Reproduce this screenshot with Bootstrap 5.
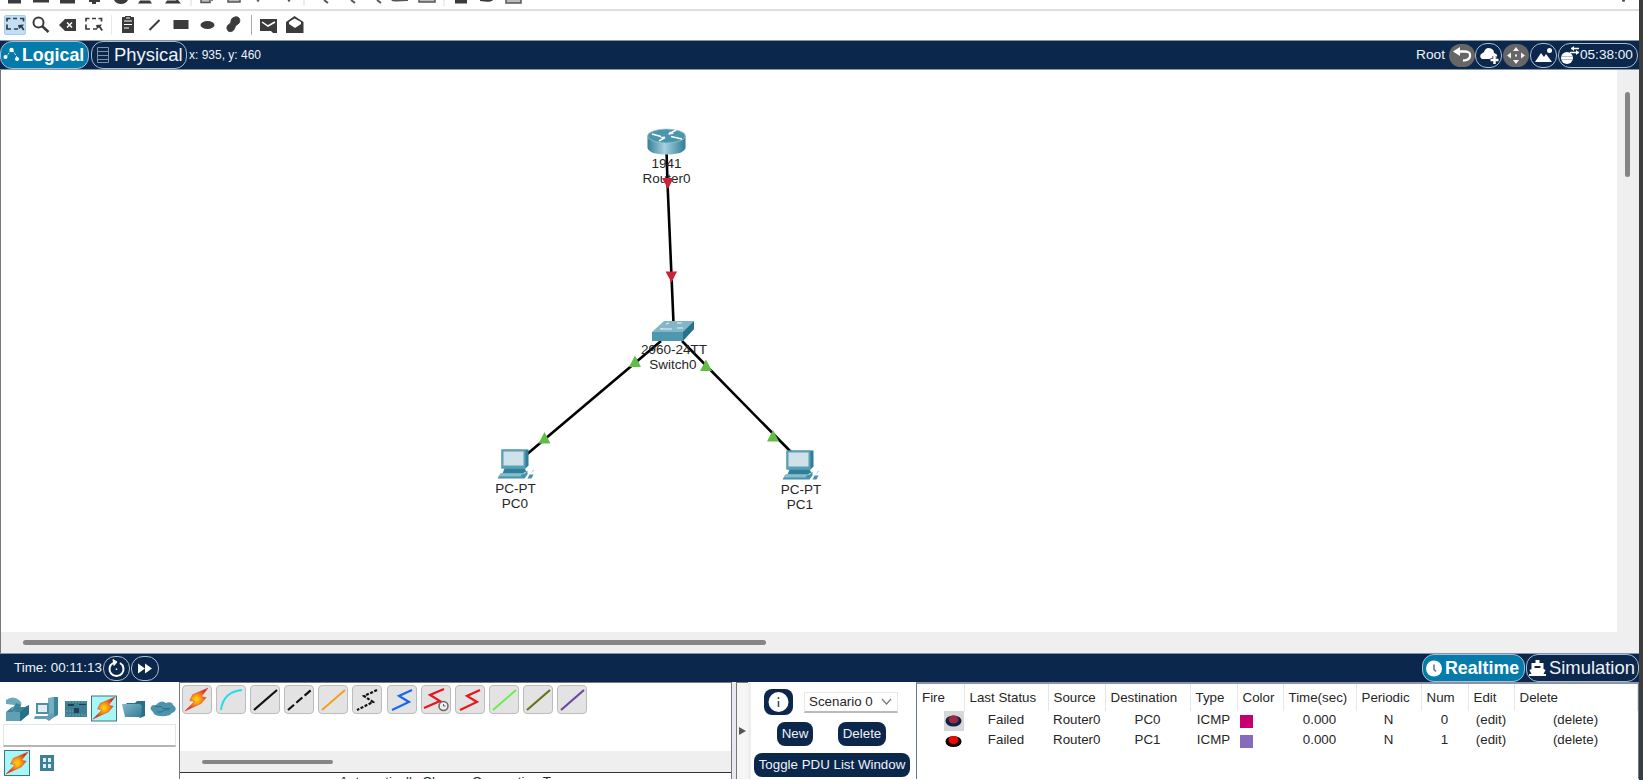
<!DOCTYPE html>
<html lang="en">
<head>
<meta charset="utf-8">
<title>Network Simulator</title>
<link href="https://cdn.jsdelivr.net/npm/bootstrap@5.3.0/dist/css/bootstrap.min.css" rel="stylesheet">
<style>
body{font-family:"Liberation Sans",Arial,sans-serif;font-size:13.33px;line-height:20px;color:#262626;background:#3c3c3c;width:1643px;height:780px}
svg{display:block;flex:none}
.app{width:1639px;height:780px;background:#fff}
.tb-top{height:11px;border-bottom:2px solid #dedede}
.tb-draw{height:29px}
.bar{height:30px;background:#0c274c;color:#eef3f8;border-top:1px solid #8596aa;border-bottom:1px solid #8596aa}
.bar.low{height:29px;border-bottom:0}
.pill{border:1px solid #a9bdd2;border-radius:12px;height:28px;font-size:18.4px;line-height:26px;white-space:nowrap}
.pill.on{background:#057bab;font-weight:700;font-size:17.8px;color:#fff}
.rnd{width:27px;height:25px;border:1px solid #a9bdd2;border-radius:12px}
.rnd.off{width:26px;height:23px;background:#666;border:0}
.clock{width:80px;height:25px;border:1px solid #a9bdd2;border-radius:12px;font-size:13.6px}
.stage{height:583px;background:#efefef;border-left:1px solid #777}
.sheet{width:1616px;height:562px;background:#fff}
.thumb{background:#858585;border-radius:3px}
.vthumb{width:5px;height:85px;margin:22px 0 0 8px}
.hthumb{width:743px;height:5px;margin:8px 0 0 22px}
.bottom{height:97px}
.p-dev{width:179px;padding:13px 0 0 3px}
.find{width:173px;height:23px;margin-top:2px;border:1px solid #e5e5e5;border-bottom:2px solid #b5b5b5}
.p-cab{width:553px;border:1px solid #777;border-width:1px 1px 0 1px}
.cab{width:30px;height:29px;border:1px solid #bcbcbc;border-radius:4px;background:#e3e3e3}
.cabs{gap:4.1px;padding:2px 0 0 2px;height:68px}
.cabscroll{height:22px;background:#efefef;border-bottom:1px solid #333}
.cabscroll .thumb{width:131px;height:4px;margin:9px 0 0 22px}
.split{width:19px;border-left:4px solid #e8e8ee;background:#f5f5f5;border-right:3px solid #ededed}
.split>div{border-left:1px solid #777;border-top:1px solid #777}
.p-scn{width:165px}
.bt{background:#0c274c;color:#eef3f8;border-radius:8px;height:24px;line-height:24px;text-align:center;white-space:nowrap;font-size:13.33px}
.sel{width:94px;height:21px;border:1px solid #e8e8e8;border-bottom:2px solid #bbb;line-height:20px}
.p-pdu{width:723px;border-left:1px solid #66788f;border-top:2px solid #8b93a5;border-right:1px solid #66788f}
.pdu{table-layout:fixed;width:720px;border-collapse:collapse}
.pdu td,.pdu th{padding:0;height:20.4px;line-height:18px;text-align:center;font-weight:400;white-space:nowrap;vertical-align:top}
.pdu th{height:26px;line-height:26px;border-right:1px solid #e6e6e6;text-align:left;padding:1px 0 0 5px}
.pdu td.l{text-align:left;padding-left:5px}
.sq{width:13px;height:13px;margin:4px 0 0 3px}
</style>
<script src="https://cdn.jsdelivr.net/npm/bootstrap@5.3.0/dist/js/bootstrap.bundle.min.js"></script>
</head>
<body class="overflow-hidden m-0">
<svg width="0" height="0" class="position-absolute">
<defs>
<linearGradient id="g1" x1="0" x2="1"><stop offset="0" stop-color="#36809a"/><stop offset=".45" stop-color="#a7d0dd"/><stop offset="1" stop-color="#2f7c96"/></linearGradient>
<linearGradient id="g2" x1="0" x2="1" y2="1"><stop offset="0" stop-color="#80b8ca"/><stop offset="1" stop-color="#327d96"/></linearGradient>
<radialGradient id="g3"><stop offset="0" stop-color="#ffe300"/><stop offset=".35" stop-color="#ff9d12"/><stop offset="1" stop-color="#d92c20"/></radialGradient>
<symbol id="bolt" viewBox="0 0 26 26"><path d="M25 1 9 8 6 14l5 1L1 25l17-8 5-6-5-1z" fill="url(#g3)" stroke="#dc3b22" stroke-width=".5"/></symbol>
<symbol id="pc" viewBox="0 0 40 32"><path d="M5 1h27v16l-3 3H5z" fill="#2e7f99"/><path d="M5 1h24v19H5z" fill="#5a9fb5"/><path d="M7 3h20v14H7z" fill="#cfe1e9"/><path d="M8 20h20l2 3-4 2H6z" fill="#2e7f99"/><path d="M4 25h24l3-3v4l-3 4H1z" fill="#4992aa"/><path d="M4 25h22l-2 3H2z" fill="#88bccb"/><path d="m31 30 2-4h4l-2 4z" fill="#4992aa"/><path d="M35 24q4-3 1-2" stroke="#acc" fill="none"/></symbol>
</defs></svg>
<main class="app d-flex flex-column">
<div class="tb-top d-flex justify-content-between">
<svg width="530" height="9" viewBox="0 0 530 9" fill="#3b3b3b"><path d="M8 0h13v3.500H8zM33 0h16v2.500H33zM60 0h15v3.500H60zM89 0h11v2h-4v2h-4V2h-3zM114 0h14q-2 4-7 4-5 0-7-4zM138 3.500l2-3h10l2 3zM165 3.500l2-3h10l2 3zM178 0l3 3.500h-2l-3-3.500zM455 0h12v3.500H455zM480 0h13q-2 3-13 1z"/><path d="M201 0v2.500h9V0M212 0v1M228 0v2h12V0M506 0v3h15V0M419 0v2h16V0" fill="#bbb" stroke="#555" stroke-width="1.500"/><path d="M257 0l2 1M288 1l2-1M324 0l4 3M351 0l4 3M377 0l4 3M392 0q1 1 16 0" stroke="#555" stroke-width="2" fill="none"/><path d="M191 0v6M304 0v6M444 0v6" stroke="#ddd"/></svg>
<svg width="22" height="5"><path d="M5 0h3v1q-1 2-3 0z" fill="#555"/></svg>
</div>
<div class="tb-draw d-flex">
<svg width="320" height="29" viewBox="0 11 320 29" fill="#3b3b3b">
<rect x="4.500" y="15.500" width="21" height="19" rx="1.500" fill="#c1dff6" stroke="#a5ccec"/>
<g fill="none" stroke="#3b3b3b" stroke-width="1.700"><path d="M7 21.500v-3h3.500M13 18.500h4M20 18.500h3.500v3M7 24.500v4.500h4M14 29h4"/><path d="M86 21.500v-3h3.500M92 18.500h4M98.500 18.500h3v3M86 24.500v4.500h4M93 29h4"/></g>
<path d="M18 25l6-.5-1.500 2 2 3-1.500 1-2-3-2 1.500zM96 25l6-.5-1.500 2 2.500 3.500-1.500 1-2.500-3.500-2 1.500z"/>
<g fill="none" stroke="#3b3b3b" stroke-width="2"><circle cx="38.500" cy="22.500" r="5"/><path d="M42 26l6.500 6" stroke-width="2.500"/></g>
<path d="M59 25l6-6h11v12H65z"/><path d="M67 22.500l5 5m0-5l-5 5" stroke="#fff" stroke-width="1.500"/>
<path d="M122 17h3v-1h6v1h3v16h-12z"/><path d="M124 21h8M124 24.500h8M124 28h5" stroke="#fff"/><path d="M126 18h4" stroke="#fff"/>
<path d="M149.500 30l10-10" stroke="#3b3b3b" stroke-width="2"/>
<rect x="173.500" y="20" width="15" height="9"/><ellipse cx="207.500" cy="25" rx="7" ry="4"/>
<path d="M235 17c4-1 6 3 4 6-1 2-3 1-4 4-1 6-8 6-8 1 0-4 3-3 4-6 0-3 1-4 4-5z" stroke="#3b3b3b"/>
<path d="M111.500 15v20" stroke="#e8e8e8"/><path d="M251.500 15v20" stroke="#aaa"/>
<path d="M260 19h17v14h-4l-2-2h-11z"/><path d="M262 22l6 4 7-4" fill="none" stroke="#fff" stroke-width="1.500"/>
<path d="M286 22l8.500-6 9 6v11H286z"/><path d="M289 22l5.500-3.500L301 22v2l-6 4-6-4z" fill="#fff"/>
</svg></div>
<div class="bar d-flex align-items-center">
<div class="pill on d-flex align-items-center" style="width:89px"><svg width="21" height="26" viewBox="0 0 21 26" fill="#fff"><path d="M5 15l6-8 6 10" fill="none" stroke="#fff" stroke-width=".8" stroke-dasharray="2 1"/><circle cx="4.500" cy="15" r="2"/><circle cx="10.500" cy="8" r="2.200"/><circle cx="16" cy="17" r="2"/></svg>Logical</div>
<div class="pill d-flex align-items-center" style="width:96px;margin-left:2px"><svg width="22" height="26" fill="none" stroke="#7e91ab"><path d="M5.500 5.500h11v15h-11zM5.500 9.500h11M5.500 13.500h11M5.500 17.500h11"/></svg>Physical</div>
<span style="font-size:12px;margin-left:2px">x: 935, y: 460</span>
<span class="ms-auto" style="font-size:13.7px;margin-right:4px">Root</span>
<div class="rnd off"><svg width="26" height="23"><path d="M8 7.500h8q6 0 5 5-1 4-7 4" fill="none" stroke="#fff" stroke-width="2.300"/><path d="M4 7.500L11 3v9z" fill="#fff"/></svg></div>
<div class="rnd ms-0"><svg width="25" height="23" fill="#fff"><path d="M6 15q-3-2-1-5 2-1 3-2 2-6 8-3 2 1 2 4 4 1 3 4-1 3-4 2z"/><path d="M18.500 12v8M14.500 16h8" stroke="#0c274c" stroke-width="4"/><path d="M18.500 12v8M14.500 16h8" stroke="#fff" stroke-width="2.500"/></svg></div>
<div class="rnd off" style="margin-left:1px"><svg width="26" height="23" fill="#f2f2f2"><path d="M13 3l3 4h-6zM13 20l3-4h-6zM4 11.500l4-3v6zM22 11.500l-4-3v6z"/><rect x="12" y="10.500" width="2" height="2"/></svg></div>
<div class="rnd" style="margin-left:1px"><svg width="25" height="23" fill="#fff"><path d="M4 18l6-9 3 4 2-3 6 8z"/><circle cx="18.500" cy="6.500" r="2.500"/></svg></div>
<div class="clock d-flex align-items-center" style="margin:0 1px"><svg width="21" height="23"><circle cx="8" cy="14" r="6" fill="#fff"/><path d="M2 12.500h12M2 15.500h12" stroke="#9aabc0" stroke-width=".8"/><path d="M12 4.500h8M11 8.500h9" stroke="#fff" stroke-width="1.700"/><path d="M15 2v5l-3-2.500zM17 6v5l3-2.500z" fill="#fff"/></svg>05:38:00</div>
</div>
<div class="stage">
<div class="d-flex"><div class="sheet">
<svg width="1616" height="562" viewBox="1 70 1616 562" font-size="13.500" text-anchor="middle" fill="#262626">
<path d="M666.500 150l1 33 6 140M661 341L526 455M682 341l110 112" fill="none" stroke="#000" stroke-width="2.600"/>
<path d="M647.500 136v12q2 6.500 19 6.500t19-6.500v-12z" fill="url(#g1)"/><ellipse cx="666.500" cy="136" rx="19" ry="7" fill="#4b96ad" stroke="#9cc8d5" stroke-width=".7"/>
<g stroke="#fff" stroke-width="1.500" fill="none"><path d="M652 134l9 2.500M659 141l6-3.500M669 134l7-4M671 136.500l11 2.500"/></g><path d="M665 136.500l-5 .5 3 2zM668 134.500l6-.5-4-2.500z" fill="#fff"/>
<path d="M652 332l12-11h30l-10 11z" fill="#83b7c7"/><path d="M652 332h31v9h-31z" fill="#4d98af"/><path d="M683 332l11-11v8l-11 12z" fill="#28718a"/><path d="M666 324l3-1m-7 5l-1 1h11m5-6h5m-5 5h6" stroke="#e7f3f6" stroke-width="1.100" fill="none"/>
<text x="666.500" y="168">1941</text><text x="666.500" y="183">Router0</text>
<text x="674" y="353.500">2960-24TT</text><text x="673" y="369">Switch0</text>
<text x="515.500" y="492.500">PC-PT</text><text x="515" y="508">PC0</text>
<text x="801" y="493.500">PC-PT</text><text x="800" y="509">PC1</text>
<path d="M662 178h11.500l-5.500 11zM665.500 271.500h11.500l-5.500 11z" fill="#cb2437"/>
<path d="M629 367l6-11.500 6 11.500zM700 371l6-11.500 6 11.500zM538.500 443.500l6-11.500 6 11.500zM767 441.500l6-11.500 6 11.500z" fill="#62bd46"/>
<use href="#pc" x="496.500" y="448.500" width="40" height="32"/><use href="#pc" x="781.500" y="449.500" width="40" height="32"/>
</svg></div><div><div class="thumb vthumb"></div></div></div>
<div class="thumb hthumb"></div>
</div>
<div class="bar low d-flex align-items-center">
<span style="margin-left:14px;font-size:13.4px">Time: 00:11:13</span>
<div class="rnd" style="margin-left:1px"><svg width="25" height="23" fill="none" stroke="#fff" stroke-width="2"><path d="M9 6a7 7 0 1 0 7 0"/><path d="M9 2.500l4 2.500-3 3.500z" fill="#fff" stroke-width="1"/><path d="M12.500 11.500v1.500" stroke-width="1.500"/></svg></div>
<div class="rnd" style="width:28px;margin-left:1px"><svg width="26" height="23" fill="#fff"><path d="M6 6.500l7 5-7 5zM13 6.500l7 5-7 5z"/></svg></div>
<div class="pill on ms-auto d-flex align-items-center" style="width:103px"><svg width="22" height="26"><circle cx="11" cy="13.500" r="8" fill="#fff"/><path d="M11 9.500v5l2 2" fill="none" stroke="#57758c" stroke-width="1.500"/></svg>Realtime</div>
<div class="pill d-flex align-items-center" style="width:113px;margin-left:1px"><svg width="22" height="26" fill="#fff"><path d="M8.500 5h4v3h4v6l2 1-2 4h-12l-2-4 2-1V8h4z"/><path d="M2 20h17" stroke="#fff" stroke-width="2"/><path d="M7.500 12h6" stroke="#0c274c" stroke-width="2"/></svg>Simulation</div>
</div>
<div class="bottom d-flex overflow-hidden">
<div class="p-dev">
<div class="d-flex" style="gap:2.400px">
<svg width="27" height="27" viewBox="0 0 27 27"><path d="M3 17l6-5h13l4-2v9l-8 7H3z" fill="#3c849c"/><path d="M3 17h14v9H3z" fill="#619fb2"/><path d="M17 17l9-7v9l-9 7z" fill="#286f88"/><path d="M3 5q7-5 13 0 5 4 0 8l-5 4-3-3 4-4-9-1z" fill="#6ba9bd"/><path d="M13 8l5 2-2 5-7 1z" fill="#3c849c"/></svg>
<svg width="27" height="27" viewBox="0 0 27 27"><path d="M16 4l6-2 4 0v18l-9 5z" fill="#3c849c"/><path d="M16 3l6-1v19l-6 2z" fill="#74afc0"/><path d="M4 8h13v11H4z" fill="#4d91a8"/><path d="M6 10h9v7H6z" fill="#e3edf0"/><path d="M3 21h12l5-3 3 3-6 5-3-2H2z" fill="#619fb2"/></svg>
<svg width="27" height="27" viewBox="0 0 27 27"><path d="M3 6h22v16H3z" fill="#3b7f96"/><path d="M6 9h6v2H6zM17 9h7v1h-7zM12 13h5v5h-5z" fill="#223f4d"/><path d="M4 7h20M4 20h20M4 16h7" stroke="#74a3b1" stroke-dasharray="2 1"/></svg>
<svg width="26" height="27"><rect x=".5" y="1" width="25" height="25" fill="#a5f8f6" stroke="#3d7681"/><use href="#bolt" x="1" y="1" width="24" height="24"/></svg>
<svg width="27" height="27" viewBox="0 0 27 27"><path d="M6 8l9 0 2-2h8v15l-5 2z" fill="#286f88"/><path d="M2 9h18l2 2-1 11H5z" fill="url(#g2)"/></svg>
<svg width="27" height="27" viewBox="0 0 27 27"><path d="M4 17q-5-4 0-7 3 1 5-2 4-3 8 0 6-2 7 2 5 3 1 7-3 1-4 3-7 2-9 1-7 0-8-4z" fill="#4c94ab"/><path d="M6 11.500h6l2 2h7M8 17h5l2-2h5" fill="none" stroke="#2d718a"/></svg>
</div>
<div class="find"></div>
<div class="d-flex align-items-center" style="margin:3px 0 0 1px;gap:10px"><svg width="26" height="26"><rect x=".5" y=".5" width="25" height="25" fill="#a5f8f6" stroke="#3d7681"/><use href="#bolt" x="1" y="1" width="24" height="24"/></svg><svg width="15" height="16"><rect width="14" height="16" fill="#3d8199"/><path d="M3 3h3v4H3zM8 3h3v4H8zM3 9h3v4H3zM8 9h3v4H8z" fill="#e3eef1"/></svg></div>
</div>
<div class="p-cab">
<div class="cabs d-flex">
<div class="cab"><svg width="28" height="27"><use href="#bolt" x="1" y="1" width="25" height="25"/></svg></div>
<div class="cab"><svg width="28" height="27"><path d="M4 24Q6 6 25 4" fill="none" stroke="#28dbe9" stroke-width="2"/></svg></div>
<div class="cab"><svg width="28" height="27"><path d="M3 24L26 4" stroke="#111" stroke-width="2.200"/></svg></div>
<div class="cab"><svg width="28" height="27"><path d="M3 24L26 4" stroke="#111" stroke-width="2.200" stroke-dasharray="8 3"/></svg></div>
<div class="cab"><svg width="28" height="27"><path d="M3 24L26 4" stroke="#f2a01c" stroke-width="2"/></svg></div>
<div class="cab"><svg width="28" height="27"><path d="M24 4L11 10l9 6L4 24" fill="none" stroke="#111" stroke-width="2.200" stroke-dasharray="3 1.500"/></svg></div>
<div class="cab"><svg width="28" height="27"><path d="M24 4L11 10l10 6L4 24" fill="none" stroke="#1768f0" stroke-width="2.200"/></svg></div>
<div class="cab"><svg width="28" height="27"><path d="M22 3L8 9l10 6L2 22" fill="none" stroke="#e7171c" stroke-width="2.200"/><circle cx="21.500" cy="20" r="4.500" fill="#eee" stroke="#666" stroke-width="1.500"/><path d="M21.500 18v2h2" fill="none" stroke="#666"/></svg></div>
<div class="cab"><svg width="28" height="27"><path d="M24 4L11 10l10 6L4 24" fill="none" stroke="#e7171c" stroke-width="2.200"/></svg></div>
<div class="cab"><svg width="28" height="27"><path d="M3 24L26 4" stroke="#67ee4c" stroke-width="2"/></svg></div>
<div class="cab"><svg width="28" height="27"><path d="M3 24L26 4" stroke="#6c701d" stroke-width="2.200"/></svg></div>
<div class="cab"><svg width="28" height="27"><path d="M3 24L26 4" stroke="#6e46a2" stroke-width="2.200"/></svg></div>
</div>
<div class="cabscroll d-flex"><div class="thumb"></div></div>
<div class="text-center text-nowrap" style="line-height:18px">Automatically Choose Connection Type</div>
</div>
<div class="split d-flex"><div class="flex-fill d-flex align-items-center"><svg width="10" height="12"><path d="M2 2l7 4-7 4z" fill="#555"/></svg></div></div>
<div class="p-scn d-flex flex-column" style="padding:7px 0 0 3px">
<div class="d-flex align-items-center" style="padding-left:10px;gap:11px;height:26px"><svg width="29" height="26"><rect width="29" height="26" rx="8" fill="#0c274c"/><circle cx="14.500" cy="13" r="10" fill="#fff"/><path d="M14.500 8v2M14.500 12v6" stroke="#445" stroke-width="1.500"/></svg><div class="sel d-flex justify-content-between align-items-center ps-1"><span>Scenario 0</span><svg width="16" height="10"><path d="M1 2l4.500 5L10 2" fill="none" stroke="#777" stroke-width="1.200"/></svg></div></div>
<div class="d-flex" style="margin:7px 0 0 23px;gap:25px"><div class="bt" style="width:36px">New</div><div class="bt" style="width:48px">Delete</div></div>
<div class="bt" style="width:156px;margin-top:7px">Toggle PDU List Window</div>
</div>
<div class="p-pdu">
<table class="pdu"><colgroup><col style="width:47px"><col style="width:84px"><col style="width:57px"><col style="width:85px"><col style="width:47px"><col style="width:46px"><col style="width:73px"><col style="width:65px"><col style="width:47px"><col style="width:46px"><col style="width:123px"></colgroup>
<thead><tr><th>Fire</th><th>Last Status</th><th>Source</th><th>Destination</th><th>Type</th><th>Color</th><th>Time(sec)</th><th>Periodic</th><th>Num</th><th>Edit</th><th>Delete</th></tr></thead>
<tbody>
<tr><td><svg class="ms-auto" width="20" height="20"><path d="M0 0h20v20H0z" fill="#d7d7d7"/><ellipse cx="9.500" cy="10" rx="8" ry="5.500" fill="#0c2047"/><ellipse cx="9.500" cy="8.500" rx="5" ry="4" fill="#9b2942"/></svg></td><td>Failed</td><td class="l">Router0</td><td>PC0</td><td>ICMP</td><td><div class="sq" style="background:#c70072"></div></td><td>0.000</td><td>N</td><td>0</td><td>(edit)</td><td>(delete)</td></tr>
<tr><td><svg class="ms-auto" width="20" height="20"><ellipse cx="9.500" cy="10.500" rx="8" ry="5.500" fill="#160000"/><ellipse cx="9.500" cy="9" rx="5" ry="4" fill="#ed0808"/></svg></td><td>Failed</td><td class="l">Router0</td><td>PC1</td><td>ICMP</td><td><div class="sq" style="background:#846bbb"></div></td><td>0.000</td><td>N</td><td>1</td><td>(edit)</td><td>(delete)</td></tr>
</tbody></table>
</div>
</div>
</main>
</body>
</html>
